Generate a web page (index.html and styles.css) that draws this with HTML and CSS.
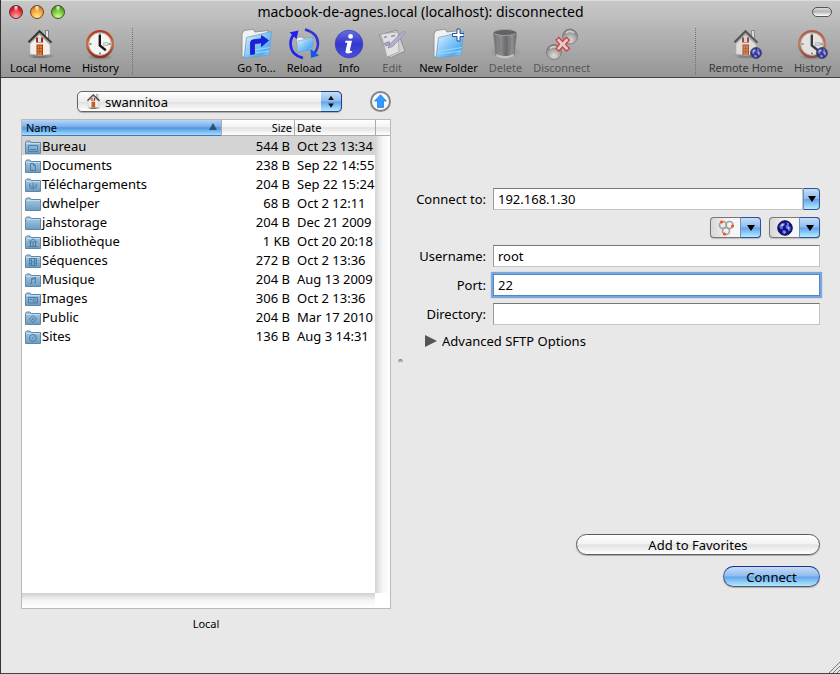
FILE: index.html
```html
<!DOCTYPE html>
<html lang="en">
<head>
  <meta charset="UTF-8">
  <meta name="viewport" content="width=device-width, initial-scale=1.0">
  <title>macbook-de-agnes.local (localhost): disconnected</title>
  <link rel="stylesheet" href="styles.css">
</head>
<body>
  <!-- Shared gradients and icons -->
  <svg class="defs" width="0" height="0" aria-hidden="true">
    <defs>
      <linearGradient id="folderBlue" x1="0" y1="0" x2="1" y2="1">
        <stop offset="0" stop-color="#eef9ff"/><stop offset=".5" stop-color="#7fc4f8"/><stop offset=".75" stop-color="#55acf4"/><stop offset="1" stop-color="#b8f0ff"/>
      </linearGradient>
      <linearGradient id="smallBlue" x1="0" y1="0" x2="0" y2="1">
        <stop offset="0" stop-color="#a9cbe2"/><stop offset="1" stop-color="#6c9bc0"/>
      </linearGradient>
      <linearGradient id="infoBlue" x1="0" y1="0" x2="0" y2="1">
        <stop offset="0" stop-color="#6a6fe0"/><stop offset=".5" stop-color="#3237cf"/><stop offset="1" stop-color="#4c4fd8"/>
      </linearGradient>
      <linearGradient id="clockRim" x1="0" y1="0" x2="0" y2="1">
        <stop offset="0" stop-color="#b33a26"/><stop offset=".5" stop-color="#c96f48"/><stop offset="1" stop-color="#8e2a1a"/>
      </linearGradient>
      <linearGradient id="binGrey" x1="0" y1="0" x2="1" y2="0">
        <stop offset="0" stop-color="#707073"/><stop offset=".3" stop-color="#8f8f92"/><stop offset=".55" stop-color="#68686b"/><stop offset=".8" stop-color="#939396"/><stop offset="1" stop-color="#646467"/>
      </linearGradient>
      <radialGradient id="bubble" cx=".5" cy=".75" r=".7">
        <stop offset="0" stop-color="#dedede"/><stop offset=".6" stop-color="#a6a6a6"/><stop offset="1" stop-color="#777"/>
      </radialGradient>
      <radialGradient id="shade">
        <stop offset="0" stop-color="#444" stop-opacity=".7"/><stop offset="1" stop-color="#444" stop-opacity="0"/>
      </radialGradient>

      <symbol id="house" viewBox="0 0 32 32">
        <ellipse cx="17" cy="28" rx="14" ry="3" fill="url(#shade)"/>
        <path d="M21.500 2.500h3v9l-3-3z" fill="#e9e6df" stroke="#6e6860" stroke-width=".8"/>
        <path d="M6 13 15.500 4 26 14v12.500l-10 1L6 26z" fill="#f3efe8" stroke="#bdb7ad" stroke-width=".6"/>
        <path d="M15.500 4 26 14v3L15.500 7 6 16v-3z" fill="#a9a39b"/>
        <path d="M4.500 14.200 15.500 3.200 27.500 14.600" fill="none" stroke="#35363a" stroke-width="2"/>
        <path d="M12 9.500h7v5h-7z" fill="#9d2a18"/>
        <path d="M14 9.200h3v4.800h-3z" fill="#d9e5ee"/>
        <path d="M12.500 16.500h6.500v10.800l-6.500-.3z" fill="#9c3d10"/>
        <path d="M13.500 17.500h4.500v9.500h-4.500z" fill="#e17b33"/>
        <path d="M13.500 20.500h4.500m-4.500 3h4.500m-2.300-6v9" stroke="#a84a18" stroke-width=".7"/>
        <path d="M11 28h10l1.500 2h-14z" fill="#777"/>
      </symbol>
      <symbol id="clock" viewBox="0 0 32 32">
        <ellipse cx="16" cy="29" rx="13" ry="3" fill="url(#shade)"/>
        <circle cx="16" cy="16" r="12.700" fill="#f5f5f3" stroke="url(#clockRim)" stroke-width="2.600"/>
        <circle cx="16" cy="16" r="11.300" fill="none" stroke="#b9a69c" stroke-width=".8"/>
        <path d="M16 5.500v2M16 24.500v2M5.500 16h2M24.500 16h2" stroke="#222" stroke-width="1"/>
        <path d="M19.500 14.500h4.500v3h-4.500z" fill="#ddd" stroke="#aaa" stroke-width=".6"/>
        <path d="M15.800 7v10.500l6 4.800" fill="none" stroke="#17171b" stroke-width="2.400"/>
      </symbol>
      <symbol id="globe" viewBox="0 0 16 16">
        <circle cx="8" cy="8" r="7.300" fill="#10107a" stroke="#16164a" stroke-width="1"/>
        <path d="M2.500 5.500 5 3l3 .3-.5 2.200-2 1.500.5 2-2 .3-1.500-1.800zM9.500 2l3 1.500-1 2 2 1.500v3l-2 1.500-1-2.500-2-1 .5-2.500 1-1zM5.500 10l3 .5 1 2-2 1.800-2-1.300z" fill="#6476ec"/>
        <path d="m4 5 2-1.200.7.700L5 6.500zM10.500 7l1.700.5-.5 2zM6.800 11.500l1 .5-.5 1z" fill="#d8e4ff"/>
      </symbol>
      <symbol id="folder" viewBox="0 0 16 14">
        <path d="M.5 13.500v-11l1-1.500H5l1 1.500h9.500v11z" fill="url(#smallBlue)" stroke="#5d88aa"/>
        <path d="M1 3.500h14" stroke="#c0dced" stroke-width="1"/>
      </symbol>
      <symbol id="bigFolder" viewBox="0 0 32 32">
        <path d="m2 6 2-3.500 9-1.300L15 4l13-1.500v5L5 28.500l-3 1z" fill="#f2f2f2" stroke="#8d8d90" stroke-width=".9"/>
        <path d="M6.500 9.500 31.500 3.500 29 27 4 30z" fill="url(#folderBlue)" stroke="#6aa0cd" stroke-width=".8"/>
        <path d="M6 23.500 29.700 19.500M5.500 26 29.500 23" stroke="#a9e1ff" stroke-width="1" opacity=".8"/>
      </symbol>
    </defs>
  </svg>

  <div class="window">
    <header class="chrome">
      <div class="title-bar">
        <div class="lights">
          <button class="light red" aria-label="Close"></button>
          <button class="light amber" aria-label="Minimize"></button>
          <button class="light green" aria-label="Zoom"></button>
        </div>
        <h1>macbook-de-agnes.local (localhost): disconnected</h1>
        <button class="pill" aria-label="Toggle toolbar"></button>
      </div>

      <nav class="toolbar">
        <div class="tools">
          <button class="tool"><svg><use href="#house"/></svg>Local Home</button>
          <button class="tool"><svg><use href="#clock"/></svg>History</button>
          <span class="separator"></span>
        </div>
        <div class="tools">
          <button class="tool">
            <svg viewBox="0 0 32 32"><use href="#bigFolder"/><path d="M10.500 26.500V15q0-3 3-3.300l8-.9V7.500l7 5-7 6v-3.700l-6 .8q-1 .2-1 1.400v9z" fill="#1b20e8" stroke="#0d1294" stroke-width=".7"/></svg>
            Go To...
          </button>
          <button class="tool">
            <svg viewBox="0 0 32 32">
              <path d="m8.500 11 2-2 4 .3 1 1.200 9-1.500v10L9 24z" fill="#f3f3f3" stroke="#8d8d90" stroke-width=".7"/>
              <path d="M10 13 25.500 9.500 24.500 21.500 9 24z" fill="url(#folderBlue)" stroke="#6aa0cd" stroke-width=".6"/>
              <path d="M15 30Q3 27 2.500 16 2.500 10 6 6.500" fill="none" stroke="#2222ee" stroke-width="2.600"/>
              <path d="M1.500 4.500 10.500 2.500 8.500 11z" fill="#2020f2"/>
              <path d="M17 1.500Q30 5 30 16 29.500 22 26 25.500" fill="none" stroke="#3434d6" stroke-width="2.600"/>
              <path d="m22.500 21 .5 9 8-2.500z" fill="#1259e8"/>
            </svg>
            Reload
          </button>
          <button class="tool">
            <svg viewBox="0 0 32 32">
              <circle cx="16" cy="16" r="13.800" fill="url(#infoBlue)" stroke="#3438ad" stroke-width=".7"/>
              <circle cx="17.600" cy="8.400" r="2.400" fill="#fff"/>
              <path d="M12.500 12.800h6.500l-2.200 9.500q0 1 2.500.5l-.5 1.700q-7 2.500-6.200-1.500l1.700-8.200h-2.200z" fill="#fff"/>
            </svg>
            Info
          </button>
          <button class="tool" disabled>
            <svg viewBox="0 0 32 32">
              <path d="m3 7 18-5 8 21-15 7z" fill="#cfcfcf" stroke="#858585" stroke-width=".8"/>
              <path d="m5 6 17-2 1 20-12 5z" fill="#e0e0e0" stroke="#999" stroke-width=".6"/>
              <path d="m8 9.500 3-1m4 0 4-1M9 15.500l4-1.500.5 2.500-3.500 1z" fill="none" stroke="#9390b8" stroke-width="1.500"/>
              <path d="m12 20 2-4L27.500 3l2 2-13 13.500z" fill="#b2afd0" stroke="#8582a5" stroke-width=".7"/>
            </svg>
            Edit
          </button>
          <button class="tool">
            <svg viewBox="0 0 32 32"><use href="#bigFolder"/><path d="M25 1h3v4.500h4v3h-4V13h-3V8.500h-4.500v-3H25z" fill="#fff" stroke="#245197" stroke-width="1"/></svg>
            New Folder
          </button>
          <button class="tool" disabled>
            <svg viewBox="0 0 32 32">
              <ellipse cx="16" cy="24" rx="16" ry="6" fill="url(#shade)" opacity=".5"/>
              <path d="M4.500 4.500 7 28q9 4 18 0l2.500-23.500z" fill="url(#binGrey)" stroke="#77777a" stroke-width=".7"/>
              <path d="M7 26q9 4 18 0l-.4 2.500q-8.600 3.800-17.200 0z" fill="#c3c3c5"/>
              <ellipse cx="16" cy="4.500" rx="11.500" ry="3" fill="#626265" stroke="#a0a0a2"/>
              <path d="m10 10 1 14M22 10l-1 14M16 10v15" stroke="#77777b" stroke-width=".8"/>
            </svg>
            Delete
          </button>
          <button class="tool" disabled>
            <svg viewBox="0 0 32 32">
              <circle cx="24" cy="8.500" r="7.500" fill="url(#bubble)" stroke="#777" stroke-width=".8"/>
              <circle cx="8" cy="24" r="7.500" fill="url(#bubble)" stroke="#777" stroke-width=".8"/>
              <path d="M20 5q4-3.500 8 0M4 20.500q4-3.500 8 0" fill="none" stroke="#ccc" stroke-width="2"/>
              <path d="m10 12 3-2.500 3.500 4 4-4 3 2.500-4 4.200 4 4.300-3 2.500-4-4-3.500 4-3-2.500 3.500-4.300z" fill="#e2cdcd" stroke="#cf4148" stroke-width="1.300"/>
            </svg>
            Disconnect
          </button>
        </div>
        <div class="tools">
          <span class="separator"></span>
          <button class="tool remote" disabled>
            <svg viewBox="0 0 32 32"><use href="#house"/><use href="#globe" x="20" y="19" width="12" height="12"/></svg>
            Remote Home
          </button>
          <button class="tool remote" disabled>
            <svg viewBox="0 0 32 32"><use href="#clock"/><use href="#globe" x="20" y="19" width="12" height="12"/></svg>
            History
          </button>
        </div>
      </nav>
    </header>

    <main class="panes">
      <section class="local">
        <div class="path-row">
          <div class="path-picker">
            <svg class="path-icon"><use href="#house"/></svg>
            <select aria-label="Folder"><option>swannitoa</option></select>
            <svg class="steppers" viewBox="0 0 20 20"><path d="m7 8.500 3-4.500 3 4.500zM7 12h6l-3 4.500z" fill="#111"/></svg>
          </div>
          <button class="up" aria-label="Parent folder">
            <svg viewBox="0 0 20 20"><path d="m10 2 7 7.500h-3.500V17h-7V9.500H3z" fill="#2f9eff" stroke="#1868f0" stroke-width=".8"/></svg>
          </button>
        </div>

        <div class="browser">
          <div class="files">
            <table>
              <colgroup><col class="col-name"><col class="col-size"><col class="col-date"></colgroup>
              <thead>
                <tr><th class="sorted">Name <svg viewBox="0 0 8 7"><path d="m4 0 4 7H0z" fill="#2b517c"/></svg></th><th class="size">Size</th><th>Date</th></tr>
              </thead>
              <tbody>
                <tr class="selected"><td><svg viewBox="0 0 16 14"><use href="#folder"/><path d="M3.500 5.500h9v6h-9zm1.500 4h6" class="mark"/></svg>Bureau</td><td class="size">544 B</td><td>Oct 23 13:34</td></tr>
                <tr><td><svg viewBox="0 0 16 14"><use href="#folder"/><path d="M5.500 4.500h3l2 2v5h-5zm3 0v2h2" class="mark"/></svg>Documents</td><td class="size">238 B</td><td>Sep 22 14:55</td></tr>
                <tr><td><svg viewBox="0 0 16 14"><use href="#folder"/><path d="M5 5.500a3.500 3.500 0 1 0 6 0M8 4.500v5m-2-2 2 2 2-2" class="mark"/></svg>Téléchargements</td><td class="size">204 B</td><td>Sep 22 15:24</td></tr>
                <tr><td><svg viewBox="0 0 16 14"><use href="#folder"/></svg>dwhelper</td><td class="size">68 B</td><td>Oct 2 12:11</td></tr>
                <tr><td><svg viewBox="0 0 16 14"><use href="#folder"/></svg>jahstorage</td><td class="size">204 B</td><td>Dec 21 2009</td></tr>
                <tr><td><svg viewBox="0 0 16 14"><use href="#folder"/><path d="m4 7 4-3 4 3zm1.500 0v4m2.500-4v4m2.500-4v4M3.500 11.500h9" class="mark"/></svg>Bibliothèque</td><td class="size">1 KB</td><td>Oct 20 20:18</td></tr>
                <tr><td><svg viewBox="0 0 16 14"><use href="#folder"/><path d="M4.500 4.500h7v7h-7zm2 0v7m3-7v7m-3-3.500h3m-5-1.500h2m-2 3h2m3-3h2m-2 3h2" class="mark"/></svg>Séquences</td><td class="size">272 B</td><td>Oct 2 13:36</td></tr>
                <tr><td><svg viewBox="0 0 16 14"><use href="#folder"/><path d="M6.500 10.500v-5l4-1v5m-4-3 4-1m-5.500 5h1.500m2.500-1H10.500" class="mark"/></svg>Musique</td><td class="size">204 B</td><td>Aug 13 2009</td></tr>
                <tr><td><svg viewBox="0 0 16 14"><use href="#folder"/><path d="M3.500 5.500h9v5.500h-9zm1.500 2h2" class="mark"/><circle cx="9.500" cy="8.200" r="1.500" class="mark"/></svg>Images</td><td class="size">306 B</td><td>Oct 2 13:36</td></tr>
                <tr><td><svg viewBox="0 0 16 14"><use href="#folder"/><path d="m8 4.500 3.500 3.500L8 11.500 4.500 8zm-1 3.500h2m-1-1v2" class="mark"/></svg>Public</td><td class="size">204 B</td><td>Mar 17 2010</td></tr>
                <tr><td><svg viewBox="0 0 16 14"><use href="#folder"/><circle cx="8" cy="8" r="3.500" class="mark"/><path d="m7 9 2.500-2.500" class="mark"/></svg>Sites</td><td class="size">136 B</td><td>Aug 3 14:31</td></tr>
              </tbody>
            </table>
          </div>
          <div class="track-side"><div class="track-head"></div></div>
          <div class="track-bottom"></div>
        </div>
        <p class="caption">Local</p>
        <span class="splitter"></span>
      </section>

      <form class="connect">
        <div class="fields">
          <label for="host">Connect to:</label>
          <div class="combo">
            <input type="text" id="host" value="192.168.1.30">
            <button type="button" class="drop" aria-label="Recent hosts"><svg viewBox="0 0 8 6"><path d="M0 0h8L4 6z"/></svg></button>
          </div>
          <div class="menus">
            <button type="button" class="menu" aria-label="Bonjour">
              <svg class="menu-icon" viewBox="0 0 16 16">
                <g fill="none" stroke="#a0a0a0" stroke-width="1.600"><circle cx="5" cy="5" r="3.500"/><circle cx="11.500" cy="5" r="3.500"/><circle cx="8" cy="11" r="3.500"/></g>
                <g fill="#ff4a10"><circle cx="3.500" cy="2" r="1.500"/><circle cx="14.500" cy="6" r="1.500"/><circle cx="6.500" cy="14" r="1.500"/></g>
              </svg>
              <span class="drop"><svg viewBox="0 0 8 6"><path d="M0 0h8L4 6z"/></svg></span>
            </button>
            <button type="button" class="menu" aria-label="Favorites">
              <svg class="menu-icon"><use href="#globe"/></svg>
              <span class="drop"><svg viewBox="0 0 8 6"><path d="M0 0h8L4 6z"/></svg></span>
            </button>
          </div>
          <label for="username">Username:</label>
          <input type="text" id="username" value="root">
          <label for="port">Port:</label>
          <input type="text" id="port" class="active" value="22">
          <label for="directory">Directory:</label>
          <input type="text" id="directory">
          <details>
            <summary><svg viewBox="0 0 12 12"><path d="M0 0v12l12-6z" fill="#555"/></svg>Advanced SFTP Options</summary>
          </details>
        </div>
        <div class="actions">
          <button type="button" class="aqua wide">Add to Favorites</button>
          <button type="submit" class="aqua default">Connect</button>
        </div>
      </form>
    </main>
    <svg class="grip" viewBox="0 0 12 12"><path d="M1 12 12 1M5 12l7-7M9 12l3-3" stroke="#777"/></svg>
  </div>
</body>
</html>
```

FILE: styles.css
```css
:root {
  --panel: #e8e8e8;
  --text: #000000;
  --line: #b9b9b9;
  --aqua: linear-gradient(#c6dcf5 0, #8fbcee 48%, #62a3ea 52%, #b4ecff 100%);
  --silver: linear-gradient(#ffffff 0, #f3f3f3 45%, #e2e2e2 52%, #ffffff 100%);
}

* {
  box-sizing: border-box;
  margin: 0;
  padding: 0;
}

body {
  background: var(--panel);
  color: var(--text);
  font: 13px/18px "Lucida Grande", "Noto Sans", sans-serif;
}

button, input, select {
  font: inherit;
  color: inherit;
  border: none;
  background: none;
  outline: none;
}

.defs {
  position: absolute;
}

.window {
  position: relative;
  display: flex;
  flex-direction: column;
  min-height: 100vh;
  border-left: 1px solid #333333;
  border-bottom: 1px solid #444444;
}

/* Title bar and toolbar */
.chrome {
  background: linear-gradient(#c8c8c8, #969696);
  border-top: 1px solid #dedede;
  border-bottom: 1px solid #404040;
}

.title-bar {
  display: grid;
  grid-template-columns: 1fr auto 1fr;
  align-items: center;
  height: 21px;
  padding: 0 8px;
}

.title-bar h1 {
  font-size: 14px;
  font-weight: normal;
}

.lights {
  display: flex;
  gap: 7px;
}

.light {
  width: 14px;
  height: 14px;
  border: 1px solid #5b3030;
  border-radius: 50%;
}

.red {
  background: radial-gradient(ellipse at 50% 10%, #ffffff 0, transparent 30%), radial-gradient(circle at 50% 90%, #ffb3b5, #e8232f 60%, #8c1018);
}

.amber {
  background: radial-gradient(ellipse at 50% 10%, #ffffff 0, transparent 30%), radial-gradient(circle at 50% 90%, #ffef8b, #f39a30 60%, #9a5013);
  border-color: #74441c;
}

.green {
  background: radial-gradient(ellipse at 50% 10%, #ffffff 0, transparent 30%), radial-gradient(circle at 50% 90%, #d3ff91, #68b82e 60%, #2f6811);
  border-color: #345c1c;
}

.pill {
  justify-self: end;
  width: 20px;
  height: 10px;
  border: 1px solid #555555;
  border-radius: 5px;
  background: linear-gradient(#dcdcdc, #b5b5b5 45%, #ffffff);
}

.toolbar {
  display: flex;
  justify-content: space-between;
  padding: 6px 9px 2px;
}

.tools {
  display: flex;
  gap: 11px;
}

.tool {
  display: flex;
  flex-direction: column;
  align-items: center;
  min-width: 32px;
  font-size: 11px;
  line-height: 15px;
  white-space: nowrap;
}

.tool svg {
  width: 32px;
  height: 32px;
}

.tool:disabled {
  color: #575757;
}

.remote:disabled {
  color: #3a3a3a;
}

.remote svg {
  opacity: 0.75;
}

.separator {
  margin: 0 2px;
  border-left: 1px dotted #707070;
}

/* Panes */
.panes {
  flex: 1;
  display: grid;
  grid-template-columns: 10fr 11fr;
  gap: 22px;
  padding: 13px 20px 0;
}

.local {
  position: relative;
  display: flex;
  flex-direction: column;
  padding-bottom: 41px;
}

.path-row {
  display: flex;
  justify-content: space-between;
  padding-left: 56px;
  gap: 28px;
}

.path-picker {
  position: relative;
  flex: 1;
}

.path-picker select {
  display: block;
  appearance: none;
  width: 100%;
  height: 21px;
  padding: 0 24px 0 27px;
  border: 1px solid #666666;
  border-radius: 5px;
  background: linear-gradient(#ffffff, #ececec 50%, #e0e0e0 52%, #ffffff);
  box-shadow: 0 1px 1px #aaaaaa;
  line-height: 18px;
}

.path-icon {
  position: absolute;
  left: 8px;
  top: 2px;
  width: 17px;
  height: 17px;
}

.steppers {
  position: absolute;
  top: 0;
  right: 0;
  width: 21px;
  height: 21px;
  border: 1px solid #243f90;
  border-left: none;
  border-radius: 0 5px 5px 0;
  background: var(--aqua);
  pointer-events: none;
}

.up {
  width: 21px;
  height: 21px;
  border: 2px solid #858585;
  border-radius: 50%;
  background: #f8f8f8;
}

.up svg {
  display: block;
  width: 17px;
  height: 17px;
}

.browser {
  flex: 1;
  display: grid;
  grid-template-columns: 1fr 15px;
  grid-template-rows: 1fr 15px;
  margin-top: 7px;
  border: 1px solid var(--line);
  background: #ffffff;
}

table {
  width: 100%;
  table-layout: fixed;
  border-collapse: separate;
  border-spacing: 0;
}

.col-size {
  width: 73px;
}

.col-date {
  width: 81px;
}

th {
  height: 16px;
  padding: 0 2px;
  border-left: 1px solid #aaaaaa;
  border-bottom: 1px solid #aaaaaa;
  background: var(--silver);
  font-size: 11px;
  font-weight: normal;
  line-height: 15px;
  text-align: left;
  white-space: nowrap;
}

th.sorted {
  padding: 0 4px;
  border-left: none;
  border-color: #4277c0;
  background: linear-gradient(#b8d6f5, #78aeea 45%, #4f95e2 52%, #a2e0ff);
}

.sorted svg {
  float: right;
  width: 8px;
  height: 7px;
  margin-top: 3px;
}

td {
  height: 19px;
  padding: 0 0 0 3px;
  white-space: nowrap;
}

td svg {
  width: 16px;
  height: 14px;
  margin-right: 1px;
  vertical-align: -3px;
}

th.size {
  text-align: right;
}

td.size {
  padding-right: 4px;
  text-align: right;
}

.mark {
  fill: none;
  stroke: #4d7ea5;
}

.selected {
  background: #d4d4d4;
}

.track-side {
  background: linear-gradient(90deg, #d4d4d4, #f5f5f5 50%, #ffffff);
}

.track-head {
  height: 16px;
  border-left: 1px solid #aaaaaa;
  border-bottom: 1px solid #aaaaaa;
  background: var(--silver);
}

.track-bottom {
  background: linear-gradient(#cfcfcf, #f5f5f5 50%, #ffffff);
}

.caption {
  margin-top: 7px;
  font-size: 11px;
  line-height: 16px;
  text-align: center;
}

.splitter {
  position: absolute;
  top: 46%;
  right: -12px;
  width: 5px;
  height: 5px;
  border-radius: 50%;
  background: linear-gradient(#777777, #ffffff);
}

/* Connection form */
.connect {
  display: flex;
  flex-direction: column;
  justify-content: space-between;
  padding: 97px 0 86px;
}

.fields {
  display: grid;
  grid-template-columns: 73px 1fr;
  align-items: center;
  gap: 7px;
}

.fields label {
  text-align: right;
  white-space: nowrap;
}

.fields input {
  width: 100%;
  height: 22px;
  padding: 0 4px;
  border: 1px solid #c4c4c4;
  border-top-color: #777777;
  border-left-color: #999999;
  background: #ffffff;
}

.fields .active {
  border-color: #5188c8;
  box-shadow: 0 0 1px 2px #77a7dc;
}

.combo {
  display: flex;
}

.combo input {
  flex: 1;
  min-width: 0;
}

.drop {
  display: flex;
  align-items: center;
  justify-content: center;
  border: 1px solid #28549e;
  border-left-color: #6d93c4;
  border-radius: 0 4px 4px 0;
  background: var(--aqua);
}

.combo .drop {
  width: 17px;
}

.drop svg {
  width: 8px;
  height: 6px;
}

.menus {
  grid-column: 2;
  display: flex;
  justify-content: flex-end;
  gap: 8px;
}

.menu {
  display: flex;
  align-items: center;
  justify-content: space-between;
  width: 51px;
  height: 21px;
  border: 1px solid #777777;
  border-right: none;
  border-radius: 4px;
  background: linear-gradient(90deg, #d8d8d8, #f6f6f6 40%);
  box-shadow: 0 1px 1px #bbbbbb;
}

.menu-icon {
  width: 16px;
  height: 16px;
  margin-left: 7px;
}

.menu .drop {
  width: 21px;
  height: 21px;
}

details {
  grid-column: 1 / 3;
  padding-left: 12px;
}

summary {
  display: flex;
  align-items: center;
  gap: 5px;
  list-style: none;
}

summary svg {
  width: 12px;
  height: 12px;
}

.actions {
  display: flex;
  flex-direction: column;
  align-items: flex-end;
  gap: 11px;
}

.aqua {
  height: 21px;
  border: 1px solid #5a5a5a;
  border-radius: 11px;
  background: var(--silver);
  box-shadow: 0 1px 1px #aaaaaa;
  line-height: 18px;
}

.wide {
  width: 60%;
}

.default {
  width: 97px;
  border-color: #1b2f98 #3a5c9c #4d5c73;
  background: var(--aqua);
}

.grip {
  position: absolute;
  right: 0;
  bottom: 0;
  width: 12px;
  height: 12px;
}
```
